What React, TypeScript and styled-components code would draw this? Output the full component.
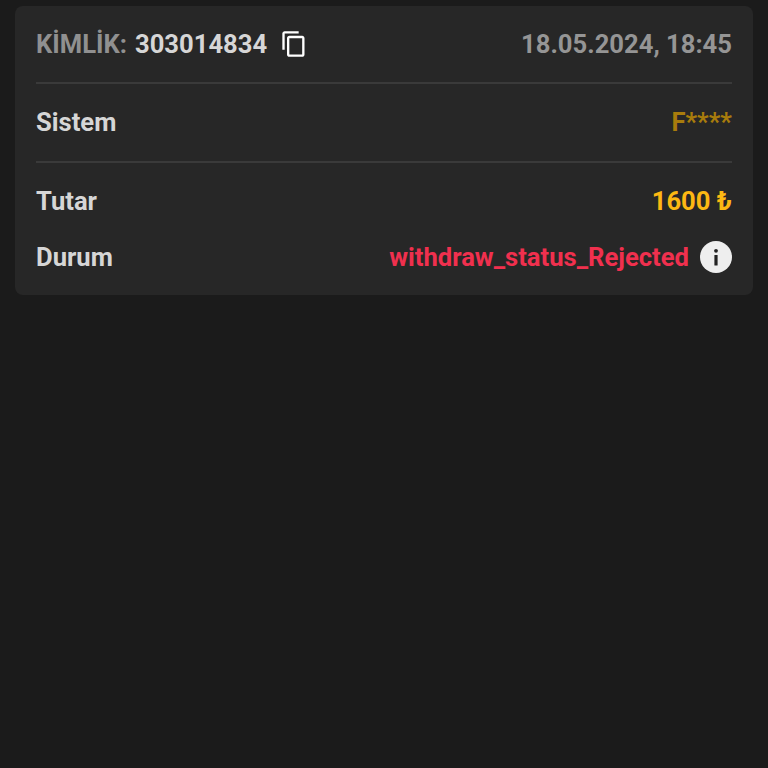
import React from "react";
import styled, { createGlobalStyle } from "styled-components";

const Global = createGlobalStyle`
  html, body { margin: 0; padding: 0; background: #1b1b1b; }
  body { font-family: Roboto, "Liberation Sans", sans-serif; }
`;

const Page = styled.div`
  min-height: 768px;
  padding: 6px 15px 0;
  box-sizing: border-box;
  background: #1b1b1b;
`;

const Card = styled.div`
  background: #272727;
  border-radius: 8px;
  padding: 0 21px 21px;
`;

const Section = styled.div<{ $height: number; $divider?: boolean; $lift?: number }>`
  display: flex;
  align-items: center;
  justify-content: space-between;
  height: ${(p) => p.$height}px;
  padding-bottom: ${(p) => p.$lift ?? 0}px;
  border-bottom: ${(p) => (p.$divider ? "2px solid #3a3a3a" : "none")};
  box-sizing: border-box;
`;

const Group = styled.div`
  display: flex;
  align-items: center;
`;

const Label = styled.span<{ $muted?: boolean }>`
  font-size: 25.6px;
  font-weight: 700;
  color: ${(p) => (p.$muted ? "#909090" : "#d6d6d6")};
`;

const Value = styled.span<{ $color: string }>`
  font-size: 25.6px;
  font-weight: 700;
  color: ${(p) => p.$color};
`;

const IdText = styled(Label)`
  margin-left: 8px;
`;

const CopyIcon = styled.svg`
  width: 28px;
  height: 28px;
  margin-left: 13px;
  fill: #fff;
`;

const InfoBadge = styled.span`
  display: flex;
  width: 32px;
  height: 32px;
  margin-left: 11px;
  align-items: center;
  justify-content: center;
  border-radius: 50%;
  background: #eee;
`;

export default function App() {
  return (
    <Page>
      <Global />
      <Card>
        <Section $height={78} $divider>
          <Group>
            <Label $muted>KİMLİK:</Label>
            <IdText>303014834</IdText>
            <CopyIcon viewBox="0 0 24 24">
              <path d="M16 1H4c-1.1 0-2 .9-2 2v14h2V3h12V1zm3 4H8c-1.1 0-2 .9-2 2v14c0 1.1.9 2 2 2h11c1.1 0 2-.9 2-2V7c0-1.100-.9-2-2-2zm0 16H8V7h11v14z" />
            </CopyIcon>
          </Group>
          <Value $color="#959595">18.05.2024, 18:45</Value>
        </Section>
        <Section $height={79} $divider $lift={2}>
          <Label>Sistem</Label>
          <Value $color="#a87c0c">F****</Value>
        </Section>
        <Section $height={77} $lift={2}>
          <Label>Tutar</Label>
          <Value $color="#fdb813">1600 ₺</Value>
        </Section>
        <Section $height={34}>
          <Label>Durum</Label>
          <Group>
            <Value $color="#f0304e">withdraw_status_Rejected</Value>
            <InfoBadge>
              <svg width="20" height="20" viewBox="0 0 20 20" fill="#222">
                <circle cx="10" cy="3.8" r="1.9" />
                <rect x="8.4" y="8" width="3.2" height="10.500" rx="0.5" />
              </svg>
            </InfoBadge>
          </Group>
        </Section>
      </Card>
    </Page>
  );
}
